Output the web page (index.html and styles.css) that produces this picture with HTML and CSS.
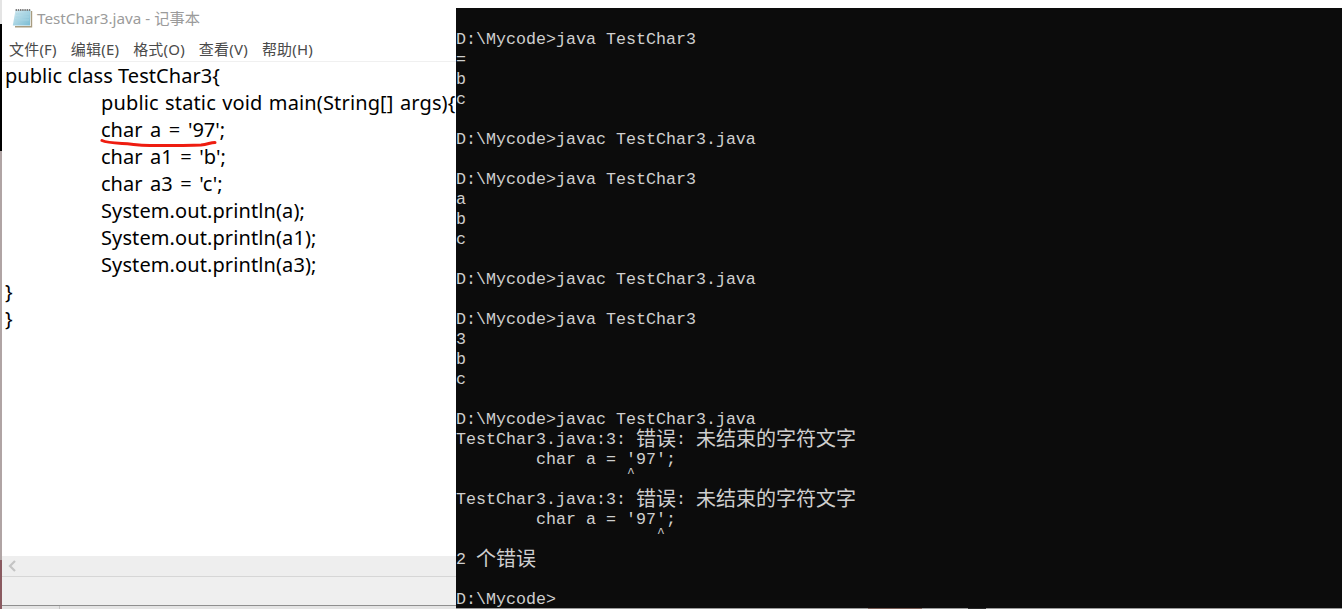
FILE: index.html
```html
<!DOCTYPE html>
<html lang="zh">
<head>
<meta charset="utf-8">
<title>TestChar3.java - 记事本</title>
<link rel="stylesheet" href="styles.css">
</head>
<body>
<div class="desktop">
  <div class="notepad">
    <div class="edge"></div>
    <div class="titlebar">
      <svg class="app-icon" width="21" height="20" viewBox="0 0 21 20">
        <defs><linearGradient id="pg" x1="0" y1="0" x2="1" y2="1"><stop offset="0" stop-color="#d5ebf2"/><stop offset="1" stop-color="#79bcd3"/></linearGradient></defs>
        <path d="M3.5 2 L18.5 2 L18 17.5 L.8 17.5 Z" fill="url(#pg)"/>
        <path d="M3.6 2 H18.4" stroke="#7d7d7d" stroke-width="2" stroke-dasharray="1.4 .8"/>
        <path d="M19.5 3 V18.7 H3" fill="none" stroke="#a89c80" stroke-width="1.4"/>
        <path d="M4 6 H17 M3.5 9 H17 M3 12 H17" stroke="#a9d5e3" stroke-width=".8"/>
      </svg>
      <span class="title">TestChar3.java - 记事本</span>
    </div>
    <nav class="menubar">
      <span>文件(F)</span><span>编辑(E)</span><span>格式(O)</span><span>查看(V)</span><span>帮助(H)</span>
    </nav>
    <div class="editor">
      <div class="code head">public class TestChar3{</div>
      <div class="code in args">public static void main(String[] args){</div>
      <div class="code in assign">char a = '97';</div>
      <div class="code in assign">char a1 = 'b';</div>
      <div class="code in assign">char a3 = 'c';</div>
      <div class="code in print">System.out.println(a);</div>
      <div class="code in print">System.out.println(a1);</div>
      <div class="code in print">System.out.println(a3);</div>
      <div class="code">}</div>
      <div class="code">}</div>
      <svg class="scribble" width="120" height="10" viewBox="0 0 120 10">
        <path d="M2 1.5 C6 3.5 14 4 22 4.5 C34 5 36 6.5 50 6.5 C70 6.5 90 6.5 101 6 C108 5.5 110 3.5 115 3.5" fill="none" stroke="#ee1c10" stroke-width="3" stroke-linecap="round"/>
      </svg>
    </div>
    <div class="hscroll">
      <svg width="8" height="12" viewBox="0 0 8 12"><path d="M7 1 L2 6 L7 11" fill="none" stroke="#c4c4c4" stroke-width="2.2"/></svg>
    </div>
    <div class="statusbar"></div>
  </div>
  <div class="below"><div class="below-grip"></div></div>
  <div class="console">
    <div class="ln"></div>
    <div class="ln">D:\Mycode&gt;java TestChar3</div>
    <div class="ln">=</div>
    <div class="ln">b</div>
    <div class="ln">c</div>
    <div class="ln"></div>
    <div class="ln">D:\Mycode&gt;javac TestChar3.java</div>
    <div class="ln"></div>
    <div class="ln">D:\Mycode&gt;java TestChar3</div>
    <div class="ln">a</div>
    <div class="ln">b</div>
    <div class="ln">c</div>
    <div class="ln"></div>
    <div class="ln">D:\Mycode&gt;javac TestChar3.java</div>
    <div class="ln"></div>
    <div class="ln">D:\Mycode&gt;java TestChar3</div>
    <div class="ln">3</div>
    <div class="ln">b</div>
    <div class="ln">c</div>
    <div class="ln"></div>
    <div class="ln">D:\Mycode&gt;javac TestChar3.java</div>
    <div class="ln">TestChar3.java:3: <span class="cjk">错误</span>: <span class="cjk">未结束的字符文字</span></div>
    <div class="ln">        char a = '97';</div>
    <div class="ln caret c1"><span class="hat">^</span></div>
    <div class="ln">TestChar3.java:3: <span class="cjk">错误</span>: <span class="cjk">未结束的字符文字</span></div>
    <div class="ln">        char a = '97';</div>
    <div class="ln caret c2"><span class="hat">^</span></div>
    <div class="ln">2 <span class="cjk">个错误</span></div>
    <div class="ln"></div>
    <div class="ln">D:\Mycode&gt;</div>
  </div>
  <div class="console-foot">
    <div class="foot-thumb"></div>
    <div class="foot-dark"></div>
  </div>
</div>
</body>
</html>
```
FILE: styles.css
```css
html, body { margin: 0; padding: 0; height: 100%; overflow: hidden; background: #fff; }
.desktop { position: relative; width: 1342px; height: 609px; overflow: hidden; background: #fff; }
.notepad { position: absolute; left: 0; top: 0; width: 456px; height: 605px; display: flex; flex-direction: column; background: #fff; padding-left: 2px; box-sizing: border-box; box-shadow: 0 1px 0 #8f8f8f; font-family: "Noto Sans", "Noto Sans CJK SC", sans-serif; }
.edge { position: absolute; left: 0; top: 0; bottom: -4px; width: 2px; background: linear-gradient(to bottom, #e4e4e4 0 24px, #000 24px 151px, #b0a4a4 151px 560px, #8a5a60 560px); }
.titlebar { height: 37px; display: flex; align-items: center; gap: 4px; padding-left: 10px; box-sizing: border-box; }
.app-icon { flex: none; margin-top: -1px; }
.title { font-size: 15.25px; line-height: 20px; margin-top: -2px; color: #9b9b9b; }
.menubar { height: 24px; display: flex; gap: 14px; padding-left: 7px; align-items: center; font-size: 15px; letter-spacing: .2px; color: #4a4a4a; border-bottom: 1px solid #f0f0f0; }
.menubar span { line-height: 20px; margin-top: -1px; }
.editor { position: relative; flex: 1; overflow: hidden; }
.code { height: 27px; line-height: 27px; padding-left: 3px; font-size: 20px; color: #000; white-space: pre; font-family: "Noto Sans", sans-serif; }
.code.in { padding-left: 99px; }
.code.head { letter-spacing: .05px; }
.code.args { word-spacing: 1px; letter-spacing: .14px; }
.code.assign { word-spacing: 2.4px; }
.code.print { letter-spacing: .1px; }
.scribble { position: absolute; left: 98px; top: 77px; }
.hscroll { height: 20px; background: #eee; border-bottom: 1px solid #d6d6d6; display: flex; align-items: center; padding-left: 6px; }
.statusbar { height: 28px; background: #efefef; }
.below { position: absolute; left: 2px; top: 606px; width: 454px; height: 3px; background: #e4e4e4; }
.below-grip { margin-left: 57px; width: 1px; height: 3px; background: #c4c4c4; }
.console { position: absolute; left: 456px; top: 8px; width: 886px; height: 600px; padding-top: 2px; box-sizing: border-box; background: #0c0c0c; overflow: hidden; color: #cfcfcf; font-family: "Liberation Mono", monospace; font-size: 16.67px; }
.ln { height: 20px; line-height: 20px; white-space: pre; }
.cjk { font-family: "Noto Sans CJK SC", sans-serif; font-size: 20px; line-height: 0; vertical-align: -2px; }
.caret { font-size: 13px; }
.hat { vertical-align: 6px; line-height: 0; }
.c1 { padding-left: 171px; }
.c2 { padding-left: 201px; }
.console-foot { position: absolute; left: 456px; top: 608px; width: 886px; height: 1px; background: #9c9c9c; }
.foot-thumb { position: absolute; left: 412px; top: 0; width: 54px; height: 1px; background: #7a5f58; }
.foot-dark { position: absolute; left: 512px; top: 0; width: 18px; height: 1px; background: #2a2a2a; }
```
